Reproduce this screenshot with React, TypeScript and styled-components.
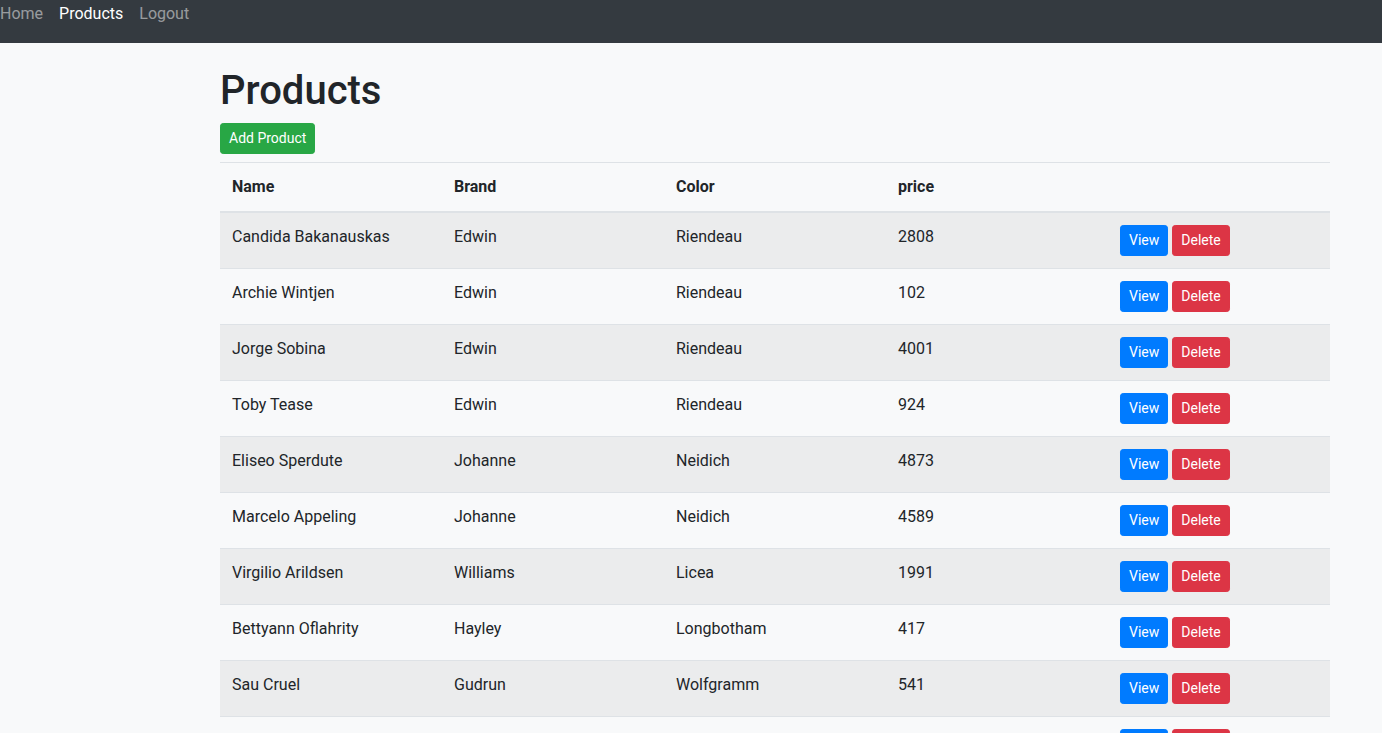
import React from "react";
import styled, { createGlobalStyle } from "styled-components";

const Global = createGlobalStyle`
  html { scrollbar-width: none; }
  html::-webkit-scrollbar { display: none; }
  body {
    margin: 0;
    background: #f8f9fa;
    color: #212529;
    font-family: Roboto, "Liberation Sans", Arial, sans-serif;
    font-size: 16px;
    line-height: 1.5;
  }
`;

const NavBar = styled.nav`
  height: 43px;
  box-sizing: border-box;
  padding-top: 3px;
  background: #343a40;
  display: flex;
  align-items: flex-start;
  gap: 16px;
`;

const NavLink = styled.a<{ $active?: boolean }>`
  color: ${(p) => (p.$active ? "#ffffff" : "rgba(255,255,255,0.5)")};
  text-decoration: none;
  font-size: 16px;
  line-height: 22px;
`;

const Main = styled.main`
  margin-left: 220px;
  width: 1110px;
`;

const Title = styled.h1`
  font-size: 40px;
  font-weight: 500;
  line-height: 48px;
  margin: 24px 0 8px;
`;

const Toolbar = styled.div`
  margin-bottom: 8px;
  display: flex;
`;

const Button = styled.button<{ $variant: "success" | "primary" | "danger" }>`
  font-family: inherit;
  font-size: 14px;
  line-height: 21px;
  padding: 4px 8px;
  border-radius: 3.2px;
  color: #fff;
  border: 1px solid
    ${(p) =>
      p.$variant === "success" ? "#28a745" : p.$variant === "primary" ? "#007bff" : "#dc3545"};
  background: ${(p) =>
    p.$variant === "success" ? "#28a745" : p.$variant === "primary" ? "#007bff" : "#dc3545"};
  cursor: pointer;
`;

const Table = styled.table`
  width: 1110px;
  border-collapse: collapse;
  table-layout: fixed;
`;

const Th = styled.th`
  text-align: left;
  font-weight: 700;
  padding: 12px;
  line-height: 24px;
  border-top: 1px solid #dee2e6;
  border-bottom: 2px solid #dee2e6;
  vertical-align: bottom;
`;

const Row = styled.tr<{ $odd: boolean }>`
  background: ${(p) => (p.$odd ? "rgba(0,0,0,0.05)" : "transparent")};
`;

const Td = styled.td`
  padding: 12px;
  line-height: 24px;
  border-top: 1px solid #dee2e6;
  vertical-align: top;
`;

const Actions = styled.div`
  display: flex;
  gap: 4px;
`;

const products = [
  ["Candida Bakanauskas", "Edwin", "Riendeau", "2808"],
  ["Archie Wintjen", "Edwin", "Riendeau", "102"],
  ["Jorge Sobina", "Edwin", "Riendeau", "4001"],
  ["Toby Tease", "Edwin", "Riendeau", "924"],
  ["Eliseo Sperdute", "Johanne", "Neidich", "4873"],
  ["Marcelo Appeling", "Johanne", "Neidich", "4589"],
  ["Virgilio Arildsen", "Williams", "Licea", "1991"],
  ["Bettyann Oflahrity", "Hayley", "Longbotham", "417"],
  ["Sau Cruel", "Gudrun", "Wolfgramm", "541"],
  ["Lorine Faler", "Gudrun", "Wolfgramm", "3320"],
];

export default function App() {
  return (
    <>
      <Global />
      <NavBar>
        <NavLink href="#">Home</NavLink>
        <NavLink href="#" $active>
          Products
        </NavLink>
        <NavLink href="#">Logout</NavLink>
      </NavBar>
      <Main>
        <Title>Products</Title>
        <Toolbar>
          <Button $variant="success">Add Product</Button>
        </Toolbar>
        <Table>
          <thead>
            <tr>
              <Th>Name</Th>
              <Th>Brand</Th>
              <Th>Color</Th>
              <Th>price</Th>
              <Th></Th>
            </tr>
          </thead>
          <tbody>
            {products.map((p, i) => (
              <Row key={i} $odd={i % 2 === 0}>
                <Td>{p[0]}</Td>
                <Td>{p[1]}</Td>
                <Td>{p[2]}</Td>
                <Td>{p[3]}</Td>
                <Td>
                  <Actions>
                    <Button $variant="primary">View</Button>
                    <Button $variant="danger">Delete</Button>
                  </Actions>
                </Td>
              </Row>
            ))}
          </tbody>
        </Table>
      </Main>
    </>
  );
}
